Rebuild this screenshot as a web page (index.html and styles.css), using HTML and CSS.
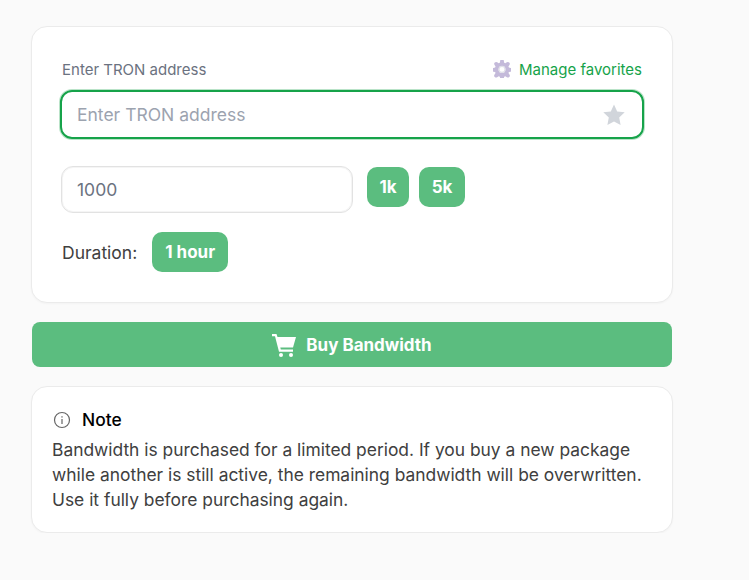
FILE: index.html
```html
<!DOCTYPE html>
<html lang="en">
<head>
  <meta charset="UTF-8">
  <meta name="viewport" content="width=device-width, initial-scale=1.0">
  <title>Buy Bandwidth</title>
  <link rel="stylesheet" href="styles.css">
</head>
<body>
  <div class="container">
    <!-- Order form -->
    <div class="card form-card">
      <div class="label-row">
        <label for="address">Enter TRON address</label>
        <a class="manage" href="#">
          <svg class="gear" viewBox="0 0 24 24" width="18" height="18"><path fill="#c4bada" fill-rule="evenodd" d="M9.500 1.500a2.500 2.500 0 0 1 5 0l.4 2.300 1.500.6 2-1.300a2.500 2.500 0 0 1 3.500 3.500l-1.300 2 .6 1.500 2.300.4a2.500 2.500 0 0 1 0 5l-2.300.4-.6 1.500 1.300 2a2.500 2.500 0 0 1-3.500 3.500l-2-1.300-1.500.6-.4 2.300a2.500 2.500 0 0 1-5 0l-.4-2.300-1.500-.6-2 1.300a2.500 2.500 0 0 1-3.500-3.500l1.300-2-.6-1.500-2.300-.4a2.500 2.500 0 0 1 0-5l2.300-.4.6-1.500-1.300-2a2.500 2.500 0 0 1 3.500-3.500l2 1.300 1.500-.6zM12 8a4.500 4.500 0 1 0 0 9 4.500 4.500 0 0 0 0-9z"/><circle cx="12" cy="12.500" r="4" fill="none" stroke="#e0e0e8" stroke-width="1.500"/></svg>
          Manage favorites
        </a>
      </div>
      <div class="address-box">
        <input type="text" id="address" placeholder="Enter TRON address">
        <svg class="star" viewBox="0 0 24 24" width="24" height="24"><path fill="#d1d5db" d="M12 1.500l3.200 6.900 7.500.9-5.500 5.200 1.400 7.500L12 18.400l-6.600 3.600 1.400-7.500-5.500-5.200 7.500-.9z"/></svg>
      </div>
      <div class="amount-row">
        <input class="amount" type="text" value="1000">
        <button class="pill pill-k">1k</button>
        <button class="pill pill-k">5k</button>
      </div>
      <div class="duration-row">
        <span>Duration:</span>
        <button class="pill">1 hour</button>
      </div>
    </div>

    <button class="buy">
      <svg viewBox="0 0 24 24" width="24" height="24"><path fill="#fff" d="M0 1h4.500l1 3H24l-3 10.500H8.300l.5 2H21v2.200H7L3 3.200H0z"/><circle fill="#fff" cx="9" cy="22" r="2"/><circle fill="#fff" cx="19" cy="22" r="2"/></svg>
      Buy Bandwidth
    </button>

    <!-- Note -->
    <div class="card note">
      <div class="note-title">
        <svg viewBox="0 0 20 20" width="20" height="20"><circle cx="10" cy="10" r="7.500" fill="none" stroke="#666" stroke-width="1.200"/><rect x="9.400" y="9" width="1.200" height="5" fill="#666"/><rect x="9.400" y="6.200" width="1.200" height="1.400" fill="#666"/></svg>
        <strong>Note</strong>
      </div>
      <p>Bandwidth is purchased for a limited period. If you buy a new package while another is still active, the remaining bandwidth will be overwritten. Use it fully before purchasing again.</p>
    </div>
  </div>
</body>
</html>
```

FILE: styles.css
```css
body {
  font-family: Inter, "Liberation Sans", sans-serif;
  margin: 0;
  padding: 26px 0 0 31px;
  background-color: #fafafa;
  color: #404040;
}
.container {
  width: 642px;
  display: flex;
  flex-direction: column;
  gap: 19px;
}
.card {
  background: #ffffff;
  border: 1px solid #ebebeb;
  border-radius: 16px;
  box-shadow: 0 1px 2px rgba(0, 0, 0, 0.03);
}
.form-card {
  padding: 32px 28px 30px 28px;
}
.label-row {
  display: flex;
  justify-content: space-between;
  align-items: center;
  height: 20px;
  padding: 0 2px 0 2px;
  margin-bottom: 11px;
}
.label-row label {
  font-size: 15px;
  color: #6b7280;
}
.manage {
  display: flex;
  align-items: center;
  gap: 8px;
  font-size: 15px;
  color: #16a34a;
  text-decoration: none;
}
.address-box {
  display: flex;
  align-items: center;
  height: 49px;
  box-sizing: border-box;
  border: 2px solid #16a34a;
  border-radius: 12px;
  box-shadow: 0 0 0 1px rgba(22, 163, 74, 0.3);
  padding: 0 16px 0 15px;
}
.address-box input {
  flex: 1;
  border: none;
  outline: none;
  padding: 0;
  font-family: inherit;
  font-size: 17.5px;
  color: #404040;
}
input::placeholder {
  color: #9ca3af;
  opacity: 1;
}
.amount-row {
  display: flex;
  align-items: flex-start;
  margin-top: 27px;
  padding-left: 1px;
  gap: 10px;
}
.amount {
  width: 292px;
  height: 47px;
  box-sizing: border-box;
  margin-right: 4px;
  border: 1px solid #e2e2e2;
  border-radius: 12px;
  box-shadow: inset 0 0 0 1px #f5f5f5;
  padding: 0 15px;
  font-family: inherit;
  font-size: 17.5px;
  color: #6b7280;
  outline: none;
}
.pill {
  height: 40px;
  margin-top: 1px;
  padding: 0 13px;
  border: none;
  border-radius: 10px;
  background-color: #5bbd7f;
  color: #ffffff;
  font-family: inherit;
  font-size: 17px;
  font-weight: 700;
}
.pill-k {
  padding: 0 12.5px;
}
.duration-row {
  display: flex;
  align-items: center;
  gap: 15px;
  margin-top: 19px;
  padding-left: 2px;
  font-size: 17.5px;
}
.duration-row .pill {
  margin-top: 0;
}
.buy {
  display: flex;
  align-items: center;
  justify-content: center;
  gap: 10px;
  width: 640px;
  height: 45px;
  margin-left: 1px;
  border: none;
  border-radius: 8px;
  background-color: #5bbd7f;
  color: #ffffff;
  font-family: inherit;
  font-size: 17px;
  font-weight: 700;
}
.note {
  padding: 20px 20px 20px 20px;
  font-size: 17.4px;
  line-height: 25px;
}
.note-title {
  display: flex;
  align-items: center;
  gap: 10px;
  height: 25px;
  margin-bottom: 5px;
  color: #000000;
}
.note-title strong {
  font-weight: 500;
}
.note p {
  margin: 0;
  color: #404040;
}
```
